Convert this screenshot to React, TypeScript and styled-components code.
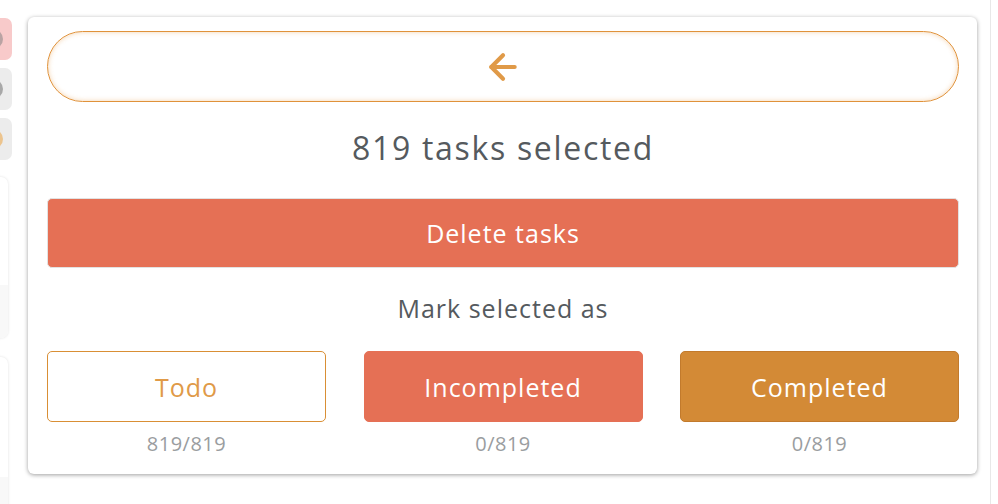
import React from "react";
import styled, { createGlobalStyle } from "styled-components";
import { ArrowLeft } from "lucide-react";

const Global = createGlobalStyle`
  html, body { margin: 0; padding: 0; background: #fff; }
  body { width: 998px; height: 504px; overflow: hidden; font-family: "Open Sans", Lato, sans-serif; }
  * { box-sizing: border-box; }
`;

const Page = styled.div`
  display: flex;
  width: 998px;
  height: 504px;
  overflow: hidden;
`;

const Backdrop = styled.div`
  width: 12px;
  flex: none;
  display: flex;
  flex-direction: column;
  padding-top: 18px;
  gap: 8px;
  overflow: hidden;
`;

const Pill = styled.div<{ $bg: string; $dot: string }>`
  flex: none;
  width: 60px;
  height: 42px;
  margin-left: -48px;
  border-radius: 7px;
  background: ${(p) => p.$bg};
  display: flex;
  align-items: center;
  justify-content: flex-end;
  padding-right: 9px;
  &::after {
    content: "";
    width: 20px;
    height: 20px;
    border-radius: 50%;
    background: ${(p) => p.$dot};
  }
`;

const BgCard = styled.div<{ $h: number; $top: number }>`
  flex: none;
  width: 60px;
  height: ${(p) => p.$h}px;
  margin-left: -52px;
  margin-top: ${(p) => p.$top}px;
  border-radius: 7px;
  background: #fff;
  box-shadow: 0 0 3px rgba(0, 0, 0, 0.12);
  display: flex;
  flex-direction: column;
  justify-content: flex-end;
  overflow: hidden;
`;

const BgStripe = styled.div<{ $h: number }>`
  height: ${(p) => p.$h}px;
  background: #f8f8f8;
`;

const Modal = styled.div`
  flex: none;
  margin-left: 16px;
  margin-top: 17px;
  width: 949px;
  height: 457px;
  background: #fff;
  border-radius: 6px;
  box-shadow: 0 1px 4px rgba(0, 0, 0, 0.38);
  padding: 14px 18px 0 19px;
  display: flex;
  flex-direction: column;
  align-items: stretch;
`;

const BackButton = styled.button`
  height: 71px;
  border: 1px solid #e0923a;
  border-radius: 36px;
  background: #fff;
  box-shadow: inset 0 0 5px rgba(232, 160, 80, 0.45);
  display: flex;
  align-items: center;
  justify-content: center;
  color: #e09a48;
  padding: 0;
  cursor: pointer;
`;

const Title = styled.div`
  margin-top: 26px;
  text-align: center;
  font-size: 32px;
  line-height: 40px;
  letter-spacing: 1.7px;
  color: #555a5e;
`;

const DeleteButton = styled.button`
  margin-top: 30px;
  height: 70px;
  border: 1px solid #e2e2e2;
  border-radius: 5px;
  background: #e57055;
  color: #fff;
  font-family: inherit;
  font-size: 25px;
  letter-spacing: 1px;
  cursor: pointer;
`;

const Subtitle = styled.div`
  margin-top: 24px;
  text-align: center;
  font-size: 25px;
  line-height: 32px;
  letter-spacing: 1px;
  color: #555a5e;
`;

const Options = styled.div`
  margin-top: 27px;
  display: grid;
  grid-template-columns: 279px 279px 279px;
  justify-content: space-between;
`;

const Option = styled.div`
  display: flex;
  flex-direction: column;
  align-items: stretch;
`;

const variants = {
  todo: { bg: "#fff", border: "#d98f35", color: "#e09a48" },
  incompleted: { bg: "#e57055", border: "#e57055", color: "#fff" },
  completed: { bg: "#d38a36", border: "#c27a2c", color: "#fff" },
};

const StateButton = styled.button<{ $v: keyof typeof variants }>`
  height: 71px;
  border-radius: 5px;
  border: 1px solid ${(p) => variants[p.$v].border};
  background: ${(p) => variants[p.$v].bg};
  color: ${(p) => variants[p.$v].color};
  font-family: inherit;
  font-size: 25px;
  letter-spacing: 1px;
  cursor: pointer;
`;

const Count = styled.div`
  margin-top: 10px;
  text-align: center;
  font-size: 20px;
  line-height: 24px;
  letter-spacing: 0.5px;
  color: #9a9da0;
`;

const Spacer = styled.div`
  flex: 1;
`;

const Divider = styled.div`
  flex: none;
  width: 1px;
  height: 504px;
  background: #e8e8e8;
  margin-right: 7px;
`;

export default function App() {
  return (
    <>
      <Global />
      <Page>
        <Backdrop>
          <Pill $bg="#f8caca" $dot="#b9a3a3" />
          <Pill $bg="#ececec" $dot="#a8a8a8" />
          <Pill $bg="#ececec" $dot="#ecc48e" />
          <BgCard $h={161} $top={9}>
            <BgStripe $h={53} />
          </BgCard>
          <BgCard $h={160} $top={11}>
            <BgStripe $h={40} />
          </BgCard>
        </Backdrop>
        <Modal>
          <BackButton aria-label="Back">
            <ArrowLeft size={40} strokeWidth={2.5} />
          </BackButton>
          <Title>819 tasks selected</Title>
          <DeleteButton>Delete tasks</DeleteButton>
          <Subtitle>Mark selected as</Subtitle>
          <Options>
            <Option>
              <StateButton $v="todo">Todo</StateButton>
              <Count>819/819</Count>
            </Option>
            <Option>
              <StateButton $v="incompleted">Incompleted</StateButton>
              <Count>0/819</Count>
            </Option>
            <Option>
              <StateButton $v="completed">Completed</StateButton>
              <Count>0/819</Count>
            </Option>
          </Options>
        </Modal>
        <Spacer />
        <Divider />
      </Page>
    </>
  );
}
